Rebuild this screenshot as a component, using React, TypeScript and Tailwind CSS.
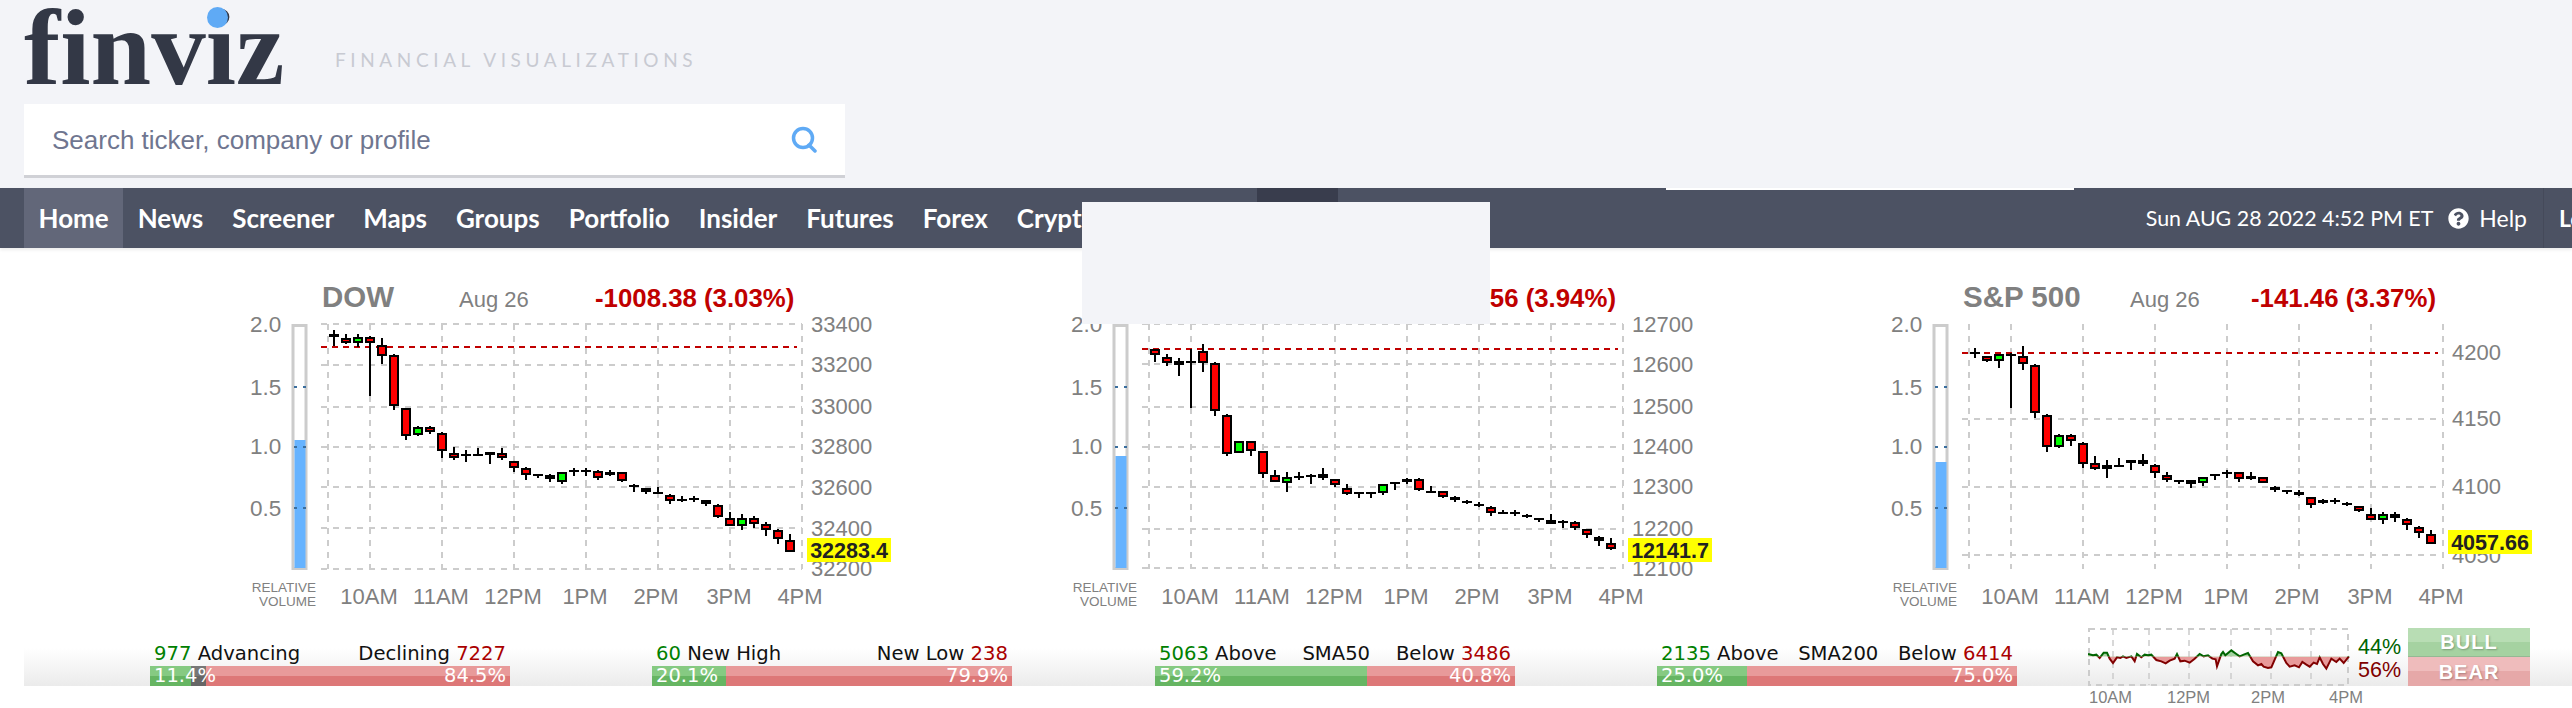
import { FaQuestionCircle } from 'react-icons/fa';

// candle = [wickTop, wickBottom, bodyTop, bodyBottom, kind]; y values are in 1/3 px
type Candle = [number, number, number, number, 'r' | 'g' | 'b'];

const dowCandles: Candle[] = [
  [180, 228, 193, 202, 'b'], [192, 222, 205, 220, 'r'], [192, 230, 200, 220, 'g'], [198, 378, 200, 220, 'r'],
  [205, 283, 224, 257, 'r'], [253, 420, 254, 407, 'r'], [415, 510, 415, 497, 'r'], [468, 497, 470, 496, 'g'],
  [468, 491, 470, 485, 'r'], [487, 565, 488, 544, 'r'], [530, 570, 548, 564, 'r'], [540, 576, 552, 556, 'b'],
  [534, 556, 553, 556, 'b'], [547, 582, 547, 556, 'b'], [535, 570, 548, 563, 'r'], [572, 606, 572, 593, 'r'],
  [590, 630, 595, 616, 'r'], [612, 624, 613, 617, 'b'], [612, 636, 614, 628, 'r'], [607, 642, 607, 635, 'g'],
  [595, 618, 600, 604, 'b'], [595, 617, 601, 604, 'b'], [600, 630, 602, 623, 'r'], [600, 618, 607, 616, 'b'],
  [606, 636, 607, 634, 'r'], [642, 666, 644, 652, 'b'], [654, 672, 655, 665, 'b'], [652, 672, 667, 670, 'b'],
  [672, 702, 674, 694, 'r'], [678, 696, 686, 694, 'b'], [678, 695, 685, 688, 'b'], [690, 708, 691, 701, 'b'],
  [703, 744, 704, 742, 'r'], [727, 768, 745, 767, 'r'], [733, 780, 745, 767, 'g'], [738, 775, 745, 761, 'r'],
  [757, 798, 762, 779, 'r'], [778, 822, 781, 808, 'r'], [792, 846, 811, 845, 'r'],
];

const nasdaqCandles: Candle[] = [
  [146, 186, 146, 165, 'r'], [162, 198, 170, 190, 'r'], [175, 228, 182, 196, 'g'], [148, 324, 182, 185, 'b'],
  [132, 216, 152, 190, 'r'], [187, 348, 188, 334, 'r'], [343, 468, 344, 461, 'r'], [422, 460, 423, 460, 'g'],
  [422, 468, 423, 454, 'r'], [452, 534, 452, 521, 'r'], [510, 545, 524, 545, 'r'], [517, 576, 531, 550, 'g'],
  [517, 540, 528, 532, 'b'], [523, 552, 524, 532, 'b'], [505, 540, 523, 533, 'b'], [536, 560, 537, 556, 'r'],
  [552, 585, 565, 581, 'r'], [577, 594, 577, 581, 'b'], [577, 594, 577, 581, 'b'], [553, 586, 553, 580, 'g'],
  [547, 570, 547, 551, 'b'], [535, 551, 536, 546, 'b'], [535, 574, 536, 569, 'r'], [558, 576, 572, 575, 'b'],
  [572, 593, 573, 592, 'r'], [589, 606, 590, 600, 'b'], [601, 612, 602, 606, 'b'], [605, 620, 612, 616, 'b'],
  [619, 648, 620, 640, 'r'], [630, 643, 636, 640, 'b'], [630, 648, 636, 640, 'b'], [642, 654, 644, 648, 'b'],
  [654, 666, 655, 660, 'b'], [642, 672, 661, 671, 'b'], [660, 684, 664, 668, 'b'], [662, 690, 667, 683, 'r'],
  [686, 714, 687, 706, 'r'], [709, 738, 710, 724, 'r'], [715, 749, 729, 748, 'r'],
];

const spCandles: Candle[] = [
  [235, 264, 247, 251, 'b'], [258, 275, 259, 274, 'r'], [252, 294, 253, 274, 'g'], [248, 414, 253, 257, 'b'],
  [228, 300, 259, 281, 'r'], [283, 444, 284, 430, 'r'], [433, 546, 434, 532, 'r'], [493, 533, 494, 532, 'g'],
  [493, 527, 494, 514, 'r'], [517, 594, 518, 581, 'r'], [558, 600, 578, 598, 'r'], [570, 624, 584, 598, 'g'],
  [564, 588, 584, 587, 'b'], [570, 600, 571, 580, 'b'], [552, 588, 571, 581, 'b'], [583, 624, 584, 610, 'r'],
  [606, 636, 614, 630, 'r'], [630, 642, 631, 636, 'b'], [630, 654, 631, 642, 'b'], [620, 648, 620, 640, 'g'],
  [612, 630, 613, 617, 'b'], [600, 624, 606, 610, 'b'], [606, 636, 607, 628, 'r'], [606, 630, 619, 628, 'b'],
  [620, 640, 620, 638, 'r'], [648, 666, 650, 660, 'b'], [660, 672, 661, 665, 'b'], [660, 678, 667, 676, 'b'],
  [680, 714, 681, 706, 'r'], [686, 703, 691, 700, 'b'], [685, 702, 691, 694, 'b'], [697, 708, 698, 706, 'b'],
  [708, 725, 709, 723, 'r'], [714, 750, 733, 749, 'r'], [727, 762, 733, 749, 'g'], [727, 756, 733, 745, 'b'],
  [745, 780, 746, 766, 'r'], [769, 804, 770, 790, 'r'], [780, 822, 793, 821, 'r'],
];

const gridX = [88, 130, 202, 274, 346, 418, 490, 562];
const timeLabels: [string, number][] = [['10AM', 129], ['11AM', 201], ['12PM', 273], ['1PM', 345], ['2PM', 416], ['3PM', 489], ['4PM', 560]];
const navItems = ['News', 'Screener', 'Maps', 'Groups', 'Portfolio', 'Insider', 'Futures', 'Forex', 'Crypto'];

type ChartProps = {
  title: string;
  dateX: number;
  change: string;
  changeX: number;
  candles: Candle[];
  zeroY: number; // page y of the candle data's origin
  gridY: number[];
  axis: [string, number][];
  redY: number;
  volTop: number;
  last: string;
  lastY: number;
  className?: string;
};

function IndexChart(props: ChartProps) {
  const { title, dateX, change, changeX, candles, zeroY, gridY, axis, redY, volTop, last, lastY, className } = props;
  const top = 250; // svg starts 2px under the nav
  return (
    <svg width={660} height={360} className={`shrink-0 ${className ?? ''}`}>
      <text x={82} y={57} fontWeight="bold" fontSize={29.5} fill="#808080">{title}</text>
      <text x={dateX} y={57} fontSize={22} fill="#808080">Aug 26</text>
      <text x={changeX} y={57} fontWeight="bold" fontSize={25.8} fill="#c00000">{change}</text>

      <rect x={53} y={75.5} width={13} height={243} fill="#fff" stroke="#cccccc" strokeWidth={3} />
      <rect x={54.5} y={volTop - top} width={11} height={568 - volTop} fill="#66b3ff" />
      {[137, 197, 258].map(y => (
        <line key={y} x1={54} x2={66} y1={y} y2={y} stroke="#3b6f9f" strokeWidth={2} strokeDasharray="3 6" />
      ))}
      {[['2.0', 82], ['1.5', 145], ['1.0', 204], ['0.5', 266]].map(([t, y]) => (
        <text key={t} x={10} y={y} fontSize={22.5} fill="#808080">{t}</text>
      ))}

      {gridX.map(x => (
        <line key={x} x1={x} x2={x} y1={74} y2={319} stroke="#cccccc" strokeWidth={2} strokeDasharray="6 6" />
      ))}
      {gridY.map(y => (
        <line key={y} x1={81} x2={562} y1={y - top} y2={y - top} stroke="#cccccc" strokeWidth={2} strokeDasharray="6 6" />
      ))}
      <line x1={81} x2={557} y1={redY - top} y2={redY - top} stroke="#c00000" strokeWidth={2} strokeDasharray="6 5" />

      {candles.map(([wt, wb, bt, bb, kind], i) => {
        const x = 94 + i * 12;
        const base = zeroY - top;
        const fill = kind === 'r' ? '#ff0000' : kind === 'g' ? '#00ff00' : '#000000';
        return (
          <g key={i} shapeRendering="crispEdges">
            <rect x={x - 1} y={base + wt / 3} width={2} height={(wb - wt) / 3} fill="#000" />
            <rect x={x - 5} y={base + bt / 3} width={10} height={Math.max((bb - bt) / 3, 2)} fill="#000" />
            {kind !== 'b' && (bb - bt) / 3 > 4 && (
              <rect x={x - 3} y={base + bt / 3 + 2} width={6} height={(bb - bt) / 3 - 4} fill={fill} />
            )}
          </g>
        );
      })}

      {axis.map(([t, y]) => (
        <text key={t} x={571} y={y - top + 8} fontSize={22} fill="#808080">{t}</text>
      ))}
      <rect x={567} y={lastY - top} width={84} height={24} fill="#ffff00" />
      <text x={609} y={lastY - top + 20} textAnchor="middle" fontWeight="bold" fontSize={21.5} fill="#222222">{last}</text>

      <text x={76} y={342} textAnchor="end" fontSize={13.5} fill="#808080">RELATIVE</text>
      <text x={76} y={356} textAnchor="end" fontSize={13.5} fill="#808080">VOLUME</text>
      {timeLabels.map(([t, x]) => (
        <text key={t} x={x} y={354} textAnchor="middle" fontSize={22} fill="#808080">{t}</text>
      ))}
    </svg>
  );
}

type StatProps = {
  leftNum: string;
  leftText: string;
  middle?: string;
  rightText: string;
  rightNum: string;
  leftPct: string;
  rightPct: string;
  greenW: string;
  grayW?: string;
};

function StatBar({ leftNum, leftText, middle, rightText, rightNum, leftPct, rightPct, greenW, grayW }: StatProps) {
  return (
    <div className="w-[360px] shrink-0 font-['DejaVu_Sans',sans-serif]">
      <div className="flex h-[38px] items-center justify-between px-1 pt-[14px] text-[19.6px] text-[#111]">
        <span><span className="text-[#008000]">{leftNum}</span> {leftText}</span>
        {middle && <span>{middle}</span>}
        <span>{rightText} <span className="text-[#aa0000]">{rightNum}</span></span>
      </div>
      <div className="relative flex h-[20px]">
        <div className={`${greenW} bg-[linear-gradient(#86ca82_50%,#66b562_50%)]`} />
        {grayW && <div className={`${grayW} bg-[linear-gradient(#777777_50%,#666666_50%)]`} />}
        <div className="flex-1 bg-[linear-gradient(#e89a9a_50%,#dd7777_50%)]" />
        <div className="absolute inset-0 flex items-center justify-between px-1 text-[19.5px] leading-none text-white">
          <span>{leftPct}</span>
          <span>{rightPct}</span>
        </div>
      </div>
    </div>
  );
}

const sentiment = '85,118 100,122 110,120 120,130 132,114 142,114 150,132 160,145 172,128 182,130 190,125 200,130 215,125 225,140 232,118 245,128 255,120 265,122 275,120 290,136 305,140 318,146 330,138 345,132 352,118 362,140 375,138 390,144 405,132 420,118 432,125 445,122 458,132 468,134 472,155 485,118 490,112 497,122 515,107 530,118 540,125 552,120 565,115 580,140 595,152 605,148 612,156 625,160 635,158 655,112 665,116 680,145 690,156 705,152 718,158 728,142 740,150 750,156 762,144 772,148 780,128 790,148 800,162 815,132 830,142 840,132 852,145 868,125'
  .split(' ')
  .map(p => p.split(',').map(Number))
  .map(([x, y]) => `${(x - 85) / 3},${(y - 40) / 3}`)
  .join(' ');

function SentimentChart() {
  const midY = 28.5;
  return (
    <svg width={261} height={58} className="shrink-0 overflow-visible">
      <defs>
        <clipPath id="above"><rect x={0} y={-5} width={262} height={midY + 5} /></clipPath>
        <clipPath id="below"><rect x={0} y={midY} width={262} height={40} /></clipPath>
      </defs>
      <rect x={1} y={1} width={259} height={56} fill="none" stroke="#cccccc" strokeWidth={2} strokeDasharray="6 5" />
      {[25, 61, 101, 143, 183, 223].map(x => (
        <line key={x} x1={x} x2={x} y1={1} y2={57} stroke="#cccccc" strokeWidth={1.5} strokeDasharray="6 5" />
      ))}
      <polygon points={`0,${midY} ${sentiment} 261,${midY}`} fill="#e89a9a" clipPath="url(#below)" />
      <polygon points={`0,${midY} ${sentiment} 261,${midY}`} fill="#a5d2a1" clipPath="url(#above)" />
      <polyline points={sentiment} fill="none" stroke="#800000" strokeWidth={2} clipPath="url(#below)" />
      <polyline points={sentiment} fill="none" stroke="#006400" strokeWidth={2} clipPath="url(#above)" />
      {[['10AM', 1], ['12PM', 79], ['2PM', 163], ['4PM', 241]].map(([t, x]) => (
        <text key={t} x={x} y={75} fontSize={16.5} fill="#808080">{t}</text>
      ))}
    </svg>
  );
}

export default function App() {
  return (
    <div className="relative h-[708px] w-[2572px] overflow-hidden bg-white font-['Liberation_Sans',Arial,sans-serif]">
      {/* header */}
      <div className="h-[188px] bg-[#f3f4f8] pl-[24px]">
        <div className="flex h-[104px] items-start">
          <div className="relative h-[104px] w-[311px]">
            <span className="block font-['Liberation_Serif',serif] text-[109px] font-bold leading-[96px] text-[#333846]">finviz</span>
            <span className="absolute left-[183px] top-[7px] h-[21px] w-[21px] rounded-full bg-[#5faaf5]" />
          </div>
          <span className="mt-[46px] font-['Lato',sans-serif] text-[19px] tracking-[4.6px] text-[#c8cad2]">FINANCIAL VISUALIZATIONS</span>
        </div>
        <div className="flex h-[74px] w-[821px] items-center justify-between border-b-[3px] border-[#d0d1d6] bg-white pl-[28px] pr-[27px]">
          <span className="pt-[2px] text-[26px] text-[#6f7690]">Search ticker, company or profile</span>
          <svg width="27" height="27" viewBox="0 0 27 27" fill="none" stroke="#5faaf5" strokeWidth="3.5" strokeLinecap="round">
            <circle cx="12" cy="12" r="9.5" />
            <path d="M18 19l6 6" />
          </svg>
        </div>
      </div>

      {/* nav */}
      <div className="flex h-[60px] items-center bg-[#4c5263] pl-[24px] font-['Lato',sans-serif] text-white shadow-[0_2px_3px_rgba(0,0,0,0.08)]">
        <div className="flex h-full items-center bg-[#626779] px-[14.5px] text-[26px] font-bold">Home</div>
        {navItems.map(item => (
          <div key={item} className="px-[14.5px] text-[26px] font-bold">{item}</div>
        ))}
        <div className="ml-auto flex h-full items-center">
          <span className="text-[21.4px]">Sun AUG 28 2022 4:52 PM ET</span>
          <FaQuestionCircle className="ml-[15px] text-[21px]" />
          <span className="ml-[10px] text-[23px]">Help</span>
          <div className="ml-[16px] flex h-full w-[29px] items-center overflow-hidden border-l border-[#454a5a] pl-[15px] text-[23px] font-bold">Login</div>
        </div>
      </div>

      {/* index charts */}
      <div className="mt-[2px] flex pl-[240px]">
        <IndexChart
          title="DOW"
          dateX={219}
          change="-1008.38 (3.03%)"
          changeX={355}
          candles={dowCandles}
          zeroY={270}
          gridY={[324, 365, 407, 447, 487, 528, 569]}
          axis={[['33400', 324], ['33200', 364], ['33000', 406], ['32800', 446], ['32600', 487], ['32400', 528], ['32200', 568]]}
          redY={347}
          volTop={440}
          last="32283.4"
          lastY={538}
        />
        <IndexChart
          className="ml-[161px]"
          title="NASDAQ"
          dateX={249}
          change="-497.56 (3.94%)"
          changeX={370}
          candles={nasdaqCandles}
          zeroY={300}
          gridY={[324, 364, 407, 447, 487, 529, 568]}
          axis={[['12700', 324], ['12600', 364], ['12500', 406], ['12400', 446], ['12300', 486], ['12200', 528], ['12100', 568]]}
          redY={349}
          volTop={456}
          last="12141.7"
          lastY={538}
        />
        <IndexChart
          className="ml-[160px]"
          title="S&P 500"
          dateX={249}
          change="-141.46 (3.37%)"
          changeX={370}
          candles={spCandles}
          zeroY={270}
          gridY={[419, 487, 555]}
          axis={[['4200', 352], ['4150', 418], ['4100', 486], ['4050', 555]]}
          redY={353}
          volTop={462}
          last="4057.66"
          lastY={530}
        />
      </div>

      {/* market stats band */}
      <div className="ml-[24px] mt-[18px] flex h-[58px] items-start bg-[linear-gradient(#ffffff_35%,#ebebeb)] pl-[126px]">
        <StatBar leftNum="977" leftText="Advancing" rightText="Declining" rightNum="7227" leftPct="11.4%" rightPct="84.5%" greenW="w-[41px]" grayW="w-[15px]" />
        <div className="ml-[142px]">
          <StatBar leftNum="60" leftText="New High" rightText="New Low" rightNum="238" leftPct="20.1%" rightPct="79.9%" greenW="w-[74px]" />
        </div>
        <div className="ml-[143px]">
          <StatBar leftNum="5063" leftText="Above" middle="SMA50" rightText="Below" rightNum="3486" leftPct="59.2%" rightPct="40.8%" greenW="w-[212px]" />
        </div>
        <div className="ml-[142px]">
          <StatBar leftNum="2135" leftText="Above" middle="SMA200" rightText="Below" rightNum="6414" leftPct="25.0%" rightPct="75.0%" greenW="w-[90px]" />
        </div>
        <div className="ml-[71px] flex">
          <SentimentChart />
          <div className="ml-[9px] mt-[8px] flex w-[50px] flex-col text-[21.5px] leading-[23px]">
            <span className="text-[#006400]">44%</span>
            <span className="text-[#800000]">56%</span>
          </div>
          <div className="flex h-[58px] w-[122px] flex-col text-[20px] font-bold tracking-[1px] text-white [text-shadow:1px_1px_2px_rgba(0,0,0,0.25)]">
            <div className="flex h-[29px] items-center justify-center border-b border-[#94b994] bg-[linear-gradient(#b8ddb4_50%,#a5d2a1_50%)]">BULL</div>
            <div className="flex h-[29px] items-center justify-center bg-[linear-gradient(#efbcbc_50%,#e6a8a8_50%)]">BEAR</div>
          </div>
        </div>
      </div>

      {/* patches sitting over the page */}
      <div className="absolute left-[1257px] top-[188px] h-[14px] w-[81px] bg-[#393d4d]" />
      <div className="absolute left-[1666px] top-[188px] h-[2px] w-[408px] bg-white" />
      <div className="absolute left-[1082px] top-[202px] h-[122px] w-[408px] bg-[#f3f4f8]" />
    </div>
  );
}
